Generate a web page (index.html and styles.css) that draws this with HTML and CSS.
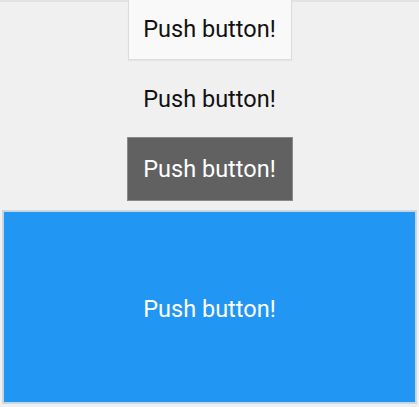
FILE: index.html
```html
<!DOCTYPE html>
<html>
<head>
<meta charset="utf-8">
<link rel="stylesheet" href="styles.css">
</head>
<body>
<div class="page">
  <div class="top-strip"></div>
  <button class="btn btn-light">Push button!</button>
  <div class="btn-flat">Push button!</div>
  <button class="btn btn-dark">Push button!</button>
  <button class="btn btn-blue">Push button!</button>
</div>
</body>
</html>
```
FILE: styles.css
```css
html, body {
  margin: 0;
  padding: 0;
  background: #f0f0f0;
}
.page {
  width: 419px;
  height: 407px;
  display: flex;
  flex-direction: column;
  align-items: center;
  font-family: Roboto, "Noto Sans", sans-serif;
  font-size: 23.5px;
  position: relative;
}
.top-strip {
  position: absolute;
  top: 0;
  left: 0;
  right: 0;
  height: 2px;
  background: #e2e2e2;
}
.btn {
  font-family: inherit;
  font-size: inherit;
  margin: 0;
  padding: 0;
  display: flex;
  align-items: center;
  justify-content: center;
  box-sizing: border-box;
}
.btn-light {
  width: 164px;
  height: 60px;
  padding-bottom: 2px;
  background: #f9f9f9;
  border: 1px solid #dcdcdc;
  border-top: none;
  color: #111;
  position: relative;
  box-shadow: 0 1px 1px #e6e6e6;
}
.btn-flat {
  height: 77px;
  display: flex;
  align-items: center;
  color: #111;
}
.btn-dark {
  width: 166px;
  height: 64px;
  background: #616161;
  border: 1px solid #8a8a8a;
  color: #fff;
}
.btn-blue {
  margin-top: 10px;
  width: 413px;
  height: 192px;
  padding-top: 4px;
  background: #2196f3;
  border: 1px solid #b8d8f2;
  box-shadow: 0 0 0 1px #d6d6d6;
  color: #fff;
}
```
